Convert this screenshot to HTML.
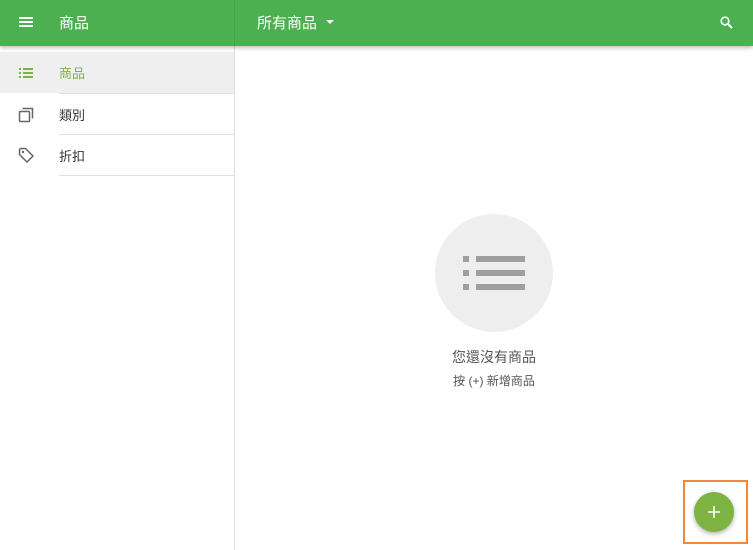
<!DOCTYPE html><html><head><meta charset="utf-8"><style>
body{margin:0;width:753px;height:550px;overflow:hidden;background:#fff;font-family:"Liberation Sans","Noto Sans CJK TC",sans-serif;position:relative}
.hdr{position:absolute;left:0;top:0;width:753px;height:46px;background:#4caf50;box-shadow:0 2px 4px rgba(0,0,0,.25);z-index:2;color:#fff}
.side{position:absolute;left:0;top:46px;width:234px;height:504px;border-right:1px solid #e0e0e0}
.row{position:absolute;left:0;width:234px;height:41px;font-size:13px;color:#333}
.row span{position:absolute;left:59px;top:11px}
.line{position:absolute;left:59px;right:0;height:1px;background:#e0e0e0}
</style></head><body>
<div class="hdr">
<svg style="position:absolute;left:19px;top:16px" width="14" height="12"><rect y="1" width="14" height="2" fill="#fff"/><rect y="5" width="14" height="2" fill="#fff"/><rect y="9" width="14" height="2" fill="#fff"/></svg>
<div style="position:absolute;left:59px;top:12px;font-size:15px">商品</div>
<div style="position:absolute;left:234px;top:0;width:1px;height:46px;background:rgba(0,0,0,.08)"></div>
<div style="position:absolute;left:257px;top:12px;font-size:15px">所有商品</div>
<svg style="position:absolute;left:325px;top:20px" width="10" height="6"><path d="M1 0L9 0L5 4Z" fill="#fff"/></svg>
<svg style="position:absolute;left:720px;top:16px" width="13" height="13"><circle cx="5" cy="5" r="3.8" stroke="#fff" stroke-width="1.6" fill="none"/><path d="M8 8L12 12" stroke="#fff" stroke-width="2"/></svg>
</div>
<div class="side">
<div class="row" style="top:6px;background:#efefef;color:#7cb342"><span>商品</span>
<svg style="position:absolute;left:19px;top:16px" width="14" height="10"><g fill="#7cb342"><rect x="0" y="0" width="2" height="2"/><rect x="0" y="4" width="2" height="2"/><rect x="0" y="8" width="2" height="2"/><rect x="4" y="0" width="10" height="2"/><rect x="4" y="4" width="10" height="2"/><rect x="4" y="8" width="10" height="2"/></g></svg></div>
<div class="line" style="top:47px"></div>
<div class="row" style="top:48px"><span>類別</span>
<svg style="position:absolute;left:18px;top:13px" width="16" height="16"><rect x="1.5" y="4.5" width="10" height="10" rx="1" fill="none" stroke="#666" stroke-width="1.5"/><path d="M4.5 1.5H14.5V11.5" fill="none" stroke="#666" stroke-width="1.5"/></svg></div>
<div class="line" style="top:88px"></div>
<div class="row" style="top:89px"><span>折扣</span>
<svg style="position:absolute;left:18px;top:12px" width="16" height="16"><path d="M1.5 2.5V7.5L9 15L15 9L7.5 1.5H2.5Z" fill="none" stroke="#666" stroke-width="1.5" stroke-linejoin="round"/><circle cx="5" cy="5" r="1.2" fill="#666"/></svg></div>
<div class="line" style="top:129px"></div>
</div>
<div style="position:absolute;left:435px;top:214px;width:118px;height:118px;border-radius:50%;background:#eeeeee"></div>
<svg style="position:absolute;left:463px;top:256px" width="62" height="35"><g fill="#9e9e9e"><rect x="0" y="0" width="6" height="6"/><rect x="0" y="14" width="6" height="6"/><rect x="0" y="28" width="6" height="6"/><rect x="13" y="0" width="49" height="6"/><rect x="13" y="14" width="49" height="6"/><rect x="13" y="28" width="49" height="6"/></g></svg>
<div style="position:absolute;left:394px;width:200px;top:347px;text-align:center;font-size:14px;color:#555">您還沒有商品</div>
<div style="position:absolute;left:394px;width:200px;top:372px;text-align:center;font-size:12px;color:#555">按 (+) 新增商品</div>
<div style="position:absolute;left:683px;top:480px;width:61px;height:60px;border:2px solid #f0883c"></div>
<div style="position:absolute;left:694px;top:492px;width:40px;height:40px;border-radius:50%;background:#7cb342;box-shadow:0 2px 5px rgba(0,0,0,.3)"></div>
<svg style="position:absolute;left:708px;top:506px" width="12" height="12"><path d="M6 0V12M0 6H12" stroke="#fff" stroke-width="1.6"/></svg>
</body></html>
